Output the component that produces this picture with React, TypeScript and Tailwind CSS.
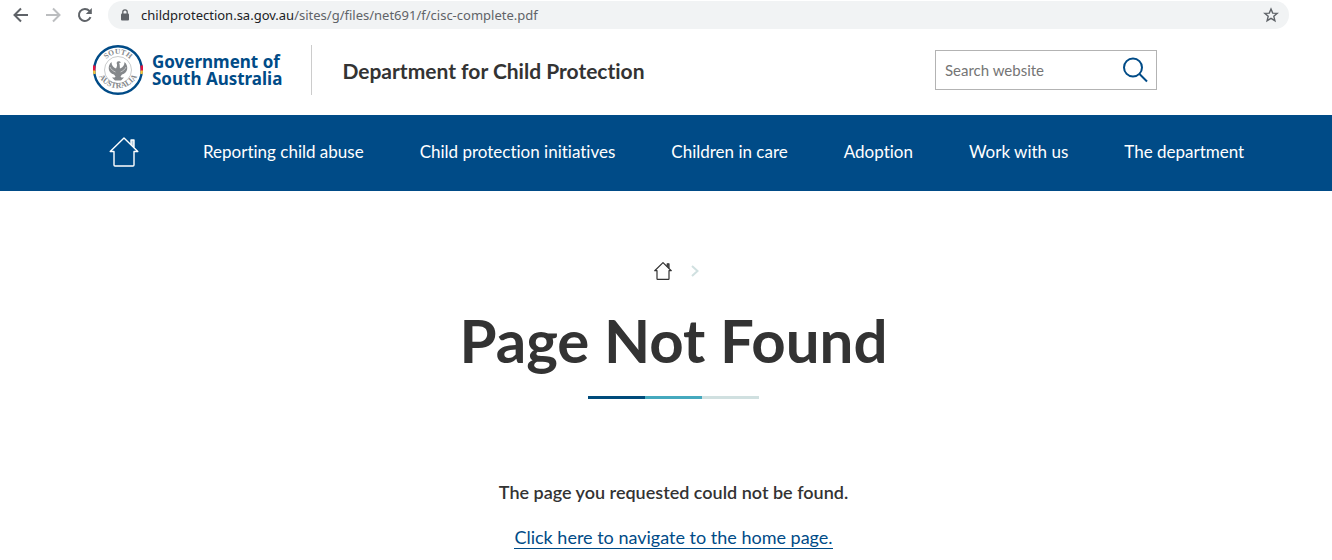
const navLinks = [
  'Reporting child abuse',
  'Child protection initiatives',
  'Children in care',
  'Adoption',
  'Work with us',
  'The department',
];

function BrowserBar() {
  return (
    <div className="flex h-[30px] items-center pr-[43px] pl-3 font-['Noto_Sans',sans-serif] text-[#5f6368]">
      <button type="button" aria-label="Back" className="mr-3.5">
        <svg className="size-[18px]" viewBox="0 0 18 18" fill="none" stroke="currentColor" strokeWidth="2">
          <path d="M16 9H3M9 2.500L2.500 9L9 15.500" />
        </svg>
      </button>
      <button type="button" aria-label="Forward" className="mr-3.5 text-[#bcbec0]">
        <svg className="size-[18px]" viewBox="0 0 18 18" fill="none" stroke="currentColor" strokeWidth="2">
          <path d="M2 9H15M9 2.500L15.500 9L9 15.500" />
        </svg>
      </button>
      <button type="button" aria-label="Reload" className="mr-3.5">
        <svg className="size-[18px]" viewBox="0 0 18 18" fill="none" stroke="currentColor" strokeWidth="2">
          <path d="M14.500 11.200A6 6 0 1 1 13.400 4.900L14.500 6" />
          <path d="M15.800 2V8H9.800Z" fill="currentColor" stroke="none" />
        </svg>
      </button>
      <div className="flex h-7 flex-1 items-center rounded-full bg-[#f1f3f4] pr-2.5 pl-3">
        <svg className="mr-[11px] h-3 w-2.5 shrink-0" viewBox="0 0 10 12" fill="none">
          <rect x="1" y="4.500" width="8" height="7" rx="1" fill="#5f6368" />
          <path d="M2.800 5V3a2.200 2.200 0 0 1 4.400 0V5" stroke="#5f6368" strokeWidth="1.300" />
        </svg>
        <p className="flex-1 text-[13px] leading-5">
          <span className="text-[#202124]">childprotection.sa.gov.au</span>/sites/g/files/net691/f/cisc-complete.pdf
        </p>
        <button type="button" aria-label="Bookmark this page">
          <svg className="size-4" viewBox="0 0 16 16" fill="none" stroke="#5f6368" strokeWidth="1.400">
            <path d="M8 2L9.700 6.100L14.200 6.400L10.800 9.300L11.900 13.700L8 11.300L4.100 13.700L5.200 9.300L1.800 6.400L6.300 6.100Z" />
          </svg>
        </button>
      </div>
    </div>
  );
}

function Seal() {
  return (
    <svg className="size-[50px] shrink-0" viewBox="0 0 50 50" aria-hidden="true">
      <defs>
        <path id="seal-top" d="M9 25A16 16 0 0 1 41 25" />
        <path id="seal-bottom" d="M4 17A21.500 21.500 0 1 0 46 17" />
      </defs>
      <circle cx="25" cy="25" r="23.800" fill="#fff" stroke="#004b87" strokeWidth="2.400" />
      <g fill="none" strokeWidth="2.400">
        <path d="M1.400 20.500A23.800 23.800 0 0 0 1.300 26" stroke="#e4103c" />
        <path d="M1.200 25.500A23.800 23.800 0 0 0 1.600 29" stroke="#f6c63c" />
        <path d="M48.600 20.500A23.800 23.800 0 0 1 48.700 26" stroke="#e4103c" />
        <path d="M48.800 25.500A23.800 23.800 0 0 1 48.400 29" stroke="#f6c63c" />
      </g>
      <circle cx="25" cy="25" r="13.500" fill="none" stroke="#a5a7aa" strokeWidth="0.600" />
      <g fill="#85888b" fontFamily="Liberation Serif, serif">
        <text textAnchor="middle" fontSize="7.500">
          <textPath href="#seal-top" startOffset="50%">SOUTH</textPath>
        </text>
        <text textAnchor="middle" fontSize="8">
          <textPath href="#seal-bottom" startOffset="50%">AUSTRALIA</textPath>
        </text>
      </g>
      <g fill="#85888b">
        <path d="M24 19.500C22.500 16 26.500 15 28 17.600L26.200 18C27 20 26.700 22 27 23.500C30 22.500 31.500 20 31.500 17C36 21 35 28 29 29.500L27.500 31.500L29 34H21L22.500 31.500L21 29.500C15 28 14 21 18.500 17C18.500 20 20 22.500 23 23.500C23.700 22 24.200 21 24 19.500Z" />
        <path d="M19 32.600H31L28 35.500H22Z" />
      </g>
      <path d="M17 22C18 24.500 20 26 22.500 27M33 22C32 24.500 30 26 27.500 27" fill="none" stroke="#fff" strokeWidth="0.500" />
    </svg>
  );
}

function HomeIcon({ className, strokeWidth }: { className: string; strokeWidth: number }) {
  return (
    <svg className={className} viewBox="0 0 30 30" fill="none" stroke="currentColor" strokeWidth={strokeWidth} strokeLinejoin="round" aria-hidden="true">
      <path d="M5 14.500H1.200L15 1L28.800 14.500H25V28Q25 29 24 29H6Q5 29 5 28Z" />
      <path d="M22 7.500V3H25V10.500" fill="currentColor" fillOpacity="0.700" />
    </svg>
  );
}

function Header() {
  return (
    <header className="mx-auto flex h-[85px] w-full max-w-[1332px] items-center justify-between pr-[175px] pb-[5px] pl-[93px]">
      <div className="flex items-center">
        <a href="#home" className="flex items-center gap-[9px] font-['Noto_Sans',sans-serif] text-[17px] leading-[17px] font-bold text-[#004b87]">
          <Seal />
          <span>
            Government of
            <br />
            South Australia
          </span>
        </a>
        <p className="ml-[29px] flex h-[50px] items-center border-l border-[#ccc] pt-px pl-[30px] text-[21px] leading-7 font-bold">
          Department for Child Protection
        </p>
      </div>
      <form role="search" className="flex h-10 w-[222px] items-center border border-[#b3b3b3] pr-2 pl-[9px]">
        <input
          type="search"
          aria-label="Search website"
          placeholder="Search website"
          className="min-w-0 flex-1 text-[15px] leading-6 outline-none placeholder:text-[#757575]"
        />
        <button type="button" aria-label="Search" className="text-[#004b87]">
          <svg className="size-[26px]" viewBox="0 0 26 26" fill="none" stroke="currentColor" strokeWidth="2">
            <circle cx="11" cy="10.500" r="9" />
            <path d="M17.500 17L25 24.500" />
          </svg>
        </button>
      </form>
    </header>
  );
}

function MainNav() {
  return (
    <nav aria-label="Main" className="bg-[#004b87] text-white">
      <div className="mx-auto flex h-[76px] max-w-[1332px] items-center gap-14 pb-[2px] pl-[109px]">
        <a href="#home" aria-label="Home" className="mr-2">
          <HomeIcon className="size-[30px]" strokeWidth={1.4} />
        </a>
        {navLinks.map((label) => (
          <a key={label} href="#section" className="text-[17px] leading-6 whitespace-nowrap">
            {label}
          </a>
        ))}
      </div>
    </nav>
  );
}

export default function App() {
  return (
    <div className="min-h-screen bg-white font-['Lato',sans-serif] text-[#333] [font-variant-ligatures:none]">
      <BrowserBar />
      <Header />
      <MainNav />
      <main className="flex flex-col items-center pt-[71px] pl-[15px]">
        <nav aria-label="Breadcrumb" className="flex items-center gap-[19px] pl-[5px]">
          <a href="#home" aria-label="Home">
            <HomeIcon className="size-[18px]" strokeWidth={2} />
          </a>
          <svg className="h-3 w-2" viewBox="0 0 8 12" fill="none" stroke="#d0e0e0" strokeWidth="2" aria-hidden="true">
            <path d="M1 1L6.500 6L1 11" />
          </svg>
        </nav>
        <h1 className="mt-6 text-[60px] leading-[72px] font-bold">Page Not Found</h1>
        <div className="mt-5 flex h-[3px] w-[171px]">
          <span className="flex-1 bg-[#004b7b]" />
          <span className="flex-1 bg-[#45a9be]" />
          <span className="flex-1 bg-[#d0e0e0]" />
        </div>
        <p className="mt-[79px] text-[18px] leading-7 font-semibold">The page you requested could not be found.</p>
        <a href="#home" className="mt-5 border-b border-[#004b87] text-[18px] leading-[22px] text-[#004b87]">
          Click here to navigate to the home page.
        </a>
      </main>
    </div>
  );
}
